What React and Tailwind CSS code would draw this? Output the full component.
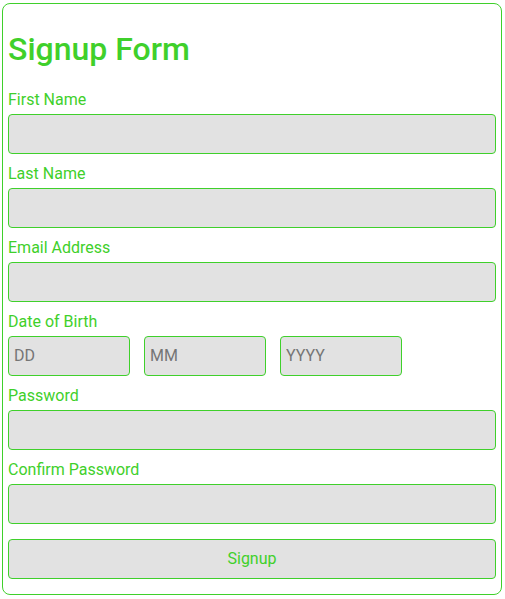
import { useState } from "react";

const inputCls =
  "block w-full h-[40px] mb-[10px] px-[5px] bg-[#e2e2e2] border border-[#3fd02b] rounded-[4px] text-[16px] text-black placeholder:text-[#757575] outline-none";

function Field({ label, type = "text", value, onChange }) {
  return (
    <div>
      <label className="block mb-[5px] text-[16px] leading-[19px] text-[#3fd02b]">{label}</label>
      <input type={type} className={inputCls} value={value} onChange={e => onChange(e.target.value)} />
    </div>
  );
}

export default function App() {
  const [form, setForm] = useState({ first: "", last: "", email: "", dd: "", mm: "", yyyy: "", pw: "", pw2: "" });
  const set = k => v => setForm({ ...form, [k]: v });

  return (
    <main className="font-['Roboto',sans-serif]">
      <form
        onSubmit={e => e.preventDefault()}
        className="ml-[2px] mt-[3px] w-[500px] border border-[#3fd02b] rounded-[8px] px-[5px] pt-[5px] pb-[5px]"
      >
        <h1 className="text-[32px] leading-[37.5px] font-medium text-[#3fd02b] mt-[21.5px] mb-[21.5px]">Signup Form</h1>

        <Field label="First Name" value={form.first} onChange={set("first")} />
        <Field label="Last Name" value={form.last} onChange={set("last")} />
        <Field label="Email Address" type="email" value={form.email} onChange={set("email")} />

        <div>
          <label className="block mb-[5px] text-[16px] leading-[19px] text-[#3fd02b]">Date of Birth</label>
          <div className="flex gap-[14px]">
            <input placeholder="DD" className={inputCls + " !w-[122px]"} value={form.dd} onChange={e => set("dd")(e.target.value)} />
            <input placeholder="MM" className={inputCls + " !w-[122px]"} value={form.mm} onChange={e => set("mm")(e.target.value)} />
            <input placeholder="YYYY" className={inputCls + " !w-[122px]"} value={form.yyyy} onChange={e => set("yyyy")(e.target.value)} />
          </div>
        </div>

        <Field label="Password" type="password" value={form.pw} onChange={set("pw")} />
        <Field label="Confirm Password" type="password" value={form.pw2} onChange={set("pw2")} />

        <button className="block w-full h-[40px] mt-[15px] mb-[10px] bg-[#e2e2e2] border border-[#3fd02b] rounded-[4px] text-[16px] text-[#3fd02b]">
          Signup
        </button>
      </form>
    </main>
  );
}
